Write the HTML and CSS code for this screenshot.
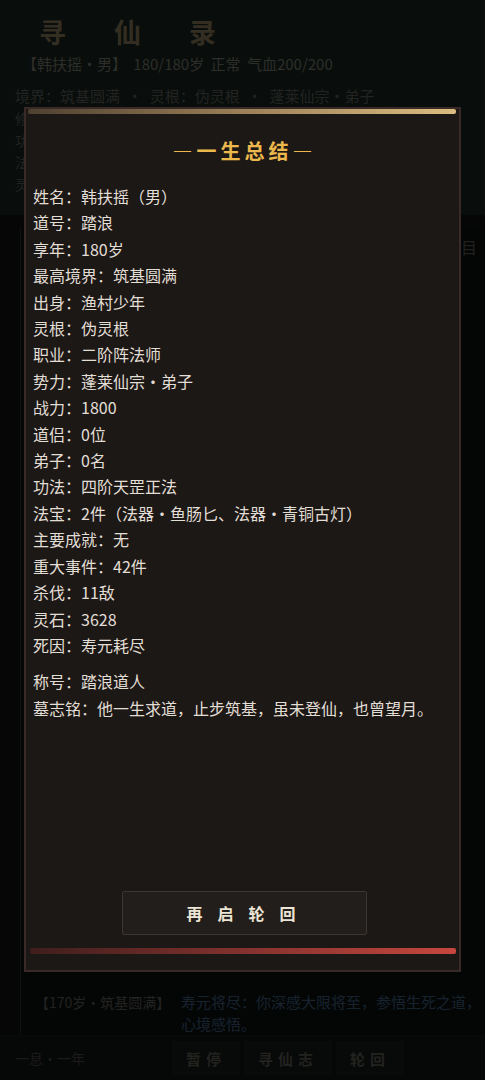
FILE: index.html
```html
<!DOCTYPE html>
<html lang="zh-CN">
<head>
    <meta charset="UTF-8">
    <meta name="viewport" content="width=device-width, initial-scale=1.0">
    <title>寻仙录</title>
    <link rel="stylesheet" href="styles.css">
</head>
<body>

    <div class="pagina">
        <header class="cabecera">
            <h1 class="logo">寻仙录</h1>
            <div class="estado">【韩扶摇・男】 180/180岁 正常 气血200/200</div>
            <div class="reino">境界：筑基圆满 · 灵根：伪灵根 · 蓬莱仙宗・弟子</div>
            <div class="datos">
                <div>修为：筑基圆满（9999/9999）</div>
                <div>功法：四阶天罡正法</div>
                <div>法宝：鱼肠匕、青铜古灯</div>
                <div>灵石：3628</div>
            </div>
        </header>

        <main class="tablero">
            <div class="tablero-titulo">生平纪事<span>目</span></div>
            <div class="registro">
                <div class="fila"><span class="edad">【120岁・筑基后期】</span><span class="texto">你于海外孤岛闭关，偶得前人遗留，</span></div>
                <div class="fila"><span class="edad">【128岁・筑基后期】</span><span class="texto">你与同门切磋阵法，略有所得，</span></div>
                <div class="fila"><span class="edad">【135岁・筑基后期】</span><span class="texto">你受宗门之命镇守灵脉，击退来犯，</span></div>
                <div class="fila"><span class="edad">【142岁・筑基圆满】</span><span class="texto">你冲击结丹失败，根基受损，闭门静养，</span></div>
                <div class="fila"><span class="edad">【150岁・筑基圆满】</span><span class="texto">你重游渔村故地，旧人皆已不在，</span></div>
                <div class="fila"><span class="edad">【158岁・筑基圆满】</span><span class="texto roja">心魔侵扰，你险些走火入魔，勤加修</span></div>
                <div class="fila"><span class="edad">【163岁・筑基圆满】</span><span class="texto">你将毕生阵法心得传于后辈，</span></div>
                <div class="fila"><span class="edad">【166岁・筑基圆满】</span><span class="texto">你独坐海边望月，心境如初。</span></div>
                <div class="fila"><span class="edad">【170岁・筑基圆满】</span><span class="texto azul">寿元将尽：你深感大限将至，参悟生死之道，心境感悟。</span></div>
            </div>
        </main>

        <footer class="barra">
            <span class="ritmo">一息・一年</span>
            <div class="acciones">
                <button class="accion">暂停</button>
                <button class="accion">寻仙志</button>
                <button class="accion">轮回</button>
            </div>
        </footer>
    </div>

    <div class="mascara">
        <div class="modal">
            <div class="franja franja-oro"></div>
            <h2 class="modal-titulo">—一生总结—</h2>

            <div class="resumen">
                <div>姓名：韩扶摇（男）</div>
                <div>道号：踏浪</div>
                <div>享年：180岁</div>
                <div>最高境界：筑基圆满</div>
                <div>出身：渔村少年</div>
                <div>灵根：伪灵根</div>
                <div>职业：二阶阵法师</div>
                <div>势力：蓬莱仙宗・弟子</div>
                <div>战力：1800</div>
                <div>道侣：0位</div>
                <div>弟子：0名</div>
                <div>功法：四阶天罡正法</div>
                <div>法宝：2件（法器・鱼肠匕、法器・青铜古灯）</div>
                <div>主要成就：无</div>
                <div>重大事件：42件</div>
                <div>杀伐：11敌</div>
                <div>灵石：3628</div>
                <div>死因：寿元耗尽</div>
            </div>

            <div class="resumen epitafio">
                <div>称号：踏浪道人</div>
                <div>墓志铭：他一生求道，止步筑基，虽未登仙，也曾望月。</div>
            </div>

            <button class="reiniciar">再启轮回</button>
            <div class="franja franja-roja"></div>
        </div>
    </div>

</body>
</html>
```

FILE: styles.css
```css
body {
    margin: 0;
    font-family: "Noto Sans CJK SC", "Noto Sans", sans-serif;
    background-color: #0e1110;
    color: #d8d2c6;
}

.pagina {
    height: 100vh;
    display: flex;
    flex-direction: column;
    overflow: hidden;
}

/* cabecera del juego (queda detras del modal) */
.cabecera {
    background-color: #1a251f;
    padding: 14px 15px 20px;
}

.logo {
    margin: 0 0 0 24px;
    font-size: 27px;
    line-height: 36px;
    letter-spacing: 48px;
    color: #8c7a5c;
}

.estado {
    font-size: 15px;
    line-height: 22px;
    margin-top: 3px;
    padding-left: 7px;
    word-spacing: 3px;
    color: #7a7b71;
}

.reino {
    font-size: 15px;
    line-height: 22px;
    margin-top: 10px;
    word-spacing: 4px;
    color: #5c615c;
}

.datos {
    font-size: 14px;
    line-height: 22px;
    color: #5c615c;
}

.tablero {
    flex: 1;
    display: flex;
    flex-direction: column;
    margin: 12px 0 0 20px;
    border-left: 1px solid #2a2c2c;
    background-color: #0d0f0f;
    overflow: hidden;
}

.tablero-titulo {
    display: flex;
    justify-content: space-between;
    font-size: 16px;
    padding: 8px 8px 0 14px;
    color: #5a5a53;
}

.registro {
    flex: 1;
    display: flex;
    flex-direction: column;
    justify-content: flex-end;
    gap: 14px;
}

.fila {
    display: flex;
    gap: 12px;
    line-height: 22px;
    height: 44px;
    padding-left: 14px;
    overflow: hidden;
}

.edad {
    flex: none;
    width: 134px;
    font-size: 14px;
    white-space: nowrap;
    color: #5e5e57;
}

.texto {
    flex: none;
    width: 302px;
    font-size: 15px;
    color: #66665e;
}

.texto.roja {
    color: #923f38;
}

.texto.azul {
    color: #3c6080;
}

.barra {
    display: flex;
    align-items: center;
    height: 44px;
    padding: 0 15px;
    background-color: #111313;
    border-top: 1px solid #1a1c1c;
}

.ritmo {
    width: 158px;
    font-size: 14px;
    color: #4a4a44;
}

.acciones {
    display: flex;
    gap: 6px;
}

.accion {
    height: 32px;
    padding: 0 12px;
    background-color: #171919;
    border: 1px solid #202222;
    color: #5c5c54;
    font-family: inherit;
    font-size: 15px;
    font-weight: bold;
    letter-spacing: 5px;
}

/* modal */
.mascara {
    position: fixed;
    inset: 0;
    background-color: rgba(0, 0, 0, 0.63);
    padding: 107px 0 0 24px;
}

.modal {
    box-sizing: border-box;
    width: 437px;
    height: 865px;
    display: flex;
    flex-direction: column;
    background-color: #1b1816;
    border: 2px solid #3a2a27;
    padding-bottom: 16px;
}

.franja {
    height: 5px;
    border-radius: 2px;
    flex: none;
}

.franja-oro {
    margin: 0 3px 0 2px;
    background: linear-gradient(90deg, #4e4030 0%, #9b8058 50%, #dcbd80 100%);
}

.franja-roja {
    height: 6px;
    margin: 13px 3px 0 4px;
    background: linear-gradient(90deg, #3e1e1c 0%, #8a3430 55%, #c6473e 100%);
}

.modal-titulo {
    margin: 23px 0 0;
    text-align: center;
    font-size: 20px;
    line-height: 28px;
    letter-spacing: 4px;
    padding-left: 4px;
    color: #ecb84c;
}

.resumen {
    margin-top: 18px;
    padding-left: 7px;
    font-size: 16px;
    line-height: 26.4px;
    color: #e3ded5;
}

.epitafio {
    margin-top: 10px;
}

.reiniciar {
    align-self: center;
    margin-top: auto;
    margin-left: 3px;
    width: 245px;
    height: 44px;
    background-color: #221e1b;
    border: 1px solid #3b3632;
    border-radius: 2px;
    color: #ece4d4;
    font-family: inherit;
    font-size: 16px;
    font-weight: bold;
    letter-spacing: 15px;
    padding-left: 15px;
    cursor: pointer;
}
```
